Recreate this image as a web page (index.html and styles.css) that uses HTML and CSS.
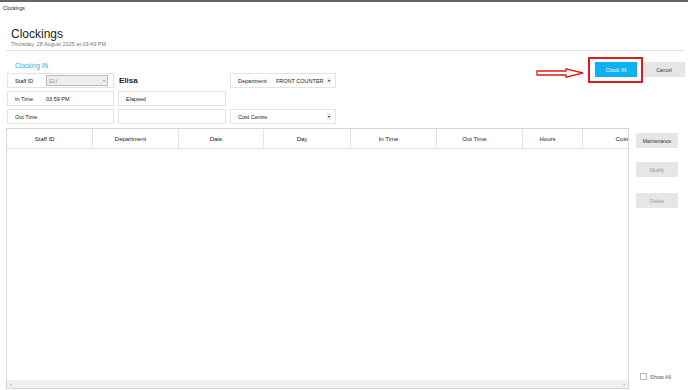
FILE: index.html
```html
<!DOCTYPE html>
<html lang="en">
<head>
    <meta charset="UTF-8">
    <title>Clockings</title>
    <link rel="stylesheet" href="styles.css">
</head>
<body>

    <div class="window-title">Clockings</div>

    <div class="page-header">
        <h1>Clockings</h1>
        <div class="subtitle">Thursday, 28 August 2025 at 03:49 PM</div>
    </div>

    <div class="top-area">
        <div class="clock-form">
            <div class="section-title">Clocking IN</div>
            <div class="form-grid">
                <div class="field">
                    <span class="label">Staff ID</span>
                    <span class="select grey">ELI<span class="caret">&#9662;</span></span>
                </div>
                <div class="staff-name">Elisa</div>
                <div class="field">
                    <span class="label wide">Department</span>
                    <span class="value">FRONT COUNTER</span>
                    <span class="drop">&#9662;</span>
                </div>

                <div class="field">
                    <span class="label">In Time</span>
                    <span class="value">03:59 PM</span>
                </div>
                <div class="field">
                    <span class="label">Elapsed</span>
                </div>
                <div></div>

                <div class="field">
                    <span class="label">Out Time</span>
                </div>
                <div class="field"></div>
                <div class="field">
                    <span class="label">Cost Centre</span>
                    <span class="drop">&#9662;</span>
                </div>
            </div>
        </div>

        <div class="actions">
            <svg class="arrow" width="48" height="10" viewBox="0 0 48 10">
                <path d="M1 3 H30 V0.8 L47 5 L30 9.2 V7 H1 Z" fill="none" stroke="#e01b1b" stroke-width="1.3"/>
            </svg>
            <div class="highlight">
                <button class="btn-primary">Clock IN</button>
            </div>
            <button class="btn">Cancel</button>
        </div>
    </div>

    <div class="main-area">
        <div class="table-box">
            <div class="table-scroll">
                <table id="clockTable">
                    <colgroup>
                        <col style="width: 85px">
                        <col style="width: 86px">
                        <col style="width: 85px">
                        <col style="width: 87px">
                        <col style="width: 86px">
                        <col style="width: 86px">
                        <col style="width: 60px">
                        <col style="width: 108px">
                    </colgroup>
                    <thead>
                        <tr>
                            <th>Staff ID</th>
                            <th>Department</th>
                            <th>Date</th>
                            <th>Day</th>
                            <th>In Time</th>
                            <th>Out Time</th>
                            <th>Hours</th>
                            <th>Cost Centre</th>
                        </tr>
                    </thead>
                    <tbody></tbody>
                </table>
            </div>
            <div class="hscroll">
                <span>&#8249;</span>
                <span>&#8250;</span>
            </div>
        </div>

        <div class="side">
            <button class="btn">Maintenance</button>
            <button class="btn disabled">Modify</button>
            <button class="btn disabled">Delete</button>
            <label class="show-all"><span class="box"></span>Show All</label>
        </div>
    </div>

</body>
</html>
```

FILE: styles.css
```css
body {
    margin: 0;
    font-family: "Liberation Sans", Arial, sans-serif;
    color: #222;
    background: #fff;
    width: 688px;
    height: 390px;
    overflow: hidden;
}
.window-title {
    border-top: 2px solid #666;
    font-size: 5px;
    padding: 3px 0 0 3px;
    height: 9px;
}
.page-header {
    margin: 14px 4px 0 6px;
    padding: 0 0 2px 5px;
    border-bottom: 1px solid #e2e2e2;
}
h1 {
    margin: 0;
    font-size: 12px;
    font-weight: normal;
    line-height: 12px;
}
.subtitle {
    font-size: 5.5px;
    line-height: 7px;
    color: #777;
    margin-top: 1px;
}
.top-area {
    display: flex;
    justify-content: space-between;
    padding: 6px 3px 0 7px;
}
.section-title {
    color: #29aae2;
    font-size: 6.5px;
    line-height: 8px;
    margin: 5px 0 3px 8px;
}
.form-grid {
    display: grid;
    grid-template-columns: 107px 108px 106px;
    grid-auto-rows: 15px;
    column-gap: 4px;
    row-gap: 3px;
}
.field {
    border: 1px solid #e4e4e4;
    display: flex;
    align-items: center;
    font-size: 5.5px;
    padding: 0 4px 0 7px;
}
.label {
    width: 31px;
}
.label.wide {
    width: 38px;
}
.value {
    flex: 1;
}
.select {
    flex: 1;
    display: flex;
    justify-content: space-between;
    align-items: center;
    height: 9px;
    padding: 0 2px;
    border: 1px solid #bbb;
    background: #eee;
    color: #999;
    margin-right: 1px;
}
.caret {
    font-size: 4px;
    color: #999;
}
.drop {
    font-size: 4px;
    background: #eee;
    padding: 1px 1px;
    margin-left: auto;
}
.staff-name {
    font-weight: bold;
    font-size: 8px;
    display: flex;
    align-items: center;
    padding-left: 1px;
}
.actions {
    display: flex;
    align-items: flex-start;
}
.arrow {
    margin-top: 11px;
    margin-right: 4px;
}
.highlight {
    display: flex;
    border: 2px solid #e01b1b;
    padding: 3px 4px 4px 5px;
}
button {
    font-family: "Liberation Sans", Arial, sans-serif;
    border: none;
    cursor: pointer;
}
.btn-primary {
    width: 42px;
    height: 15px;
    font-size: 5.5px;
    background: #0bb1f2;
    color: #fff;
    padding: 0;
}
.btn {
    width: 42px;
    height: 15px;
    font-size: 5px;
    background: #e6e6e6;
    color: #333;
    padding: 0;
}
.actions .btn {
    margin-top: 5px;
}
.main-area {
    display: flex;
    padding: 4px 0 0 6px;
}
.table-box {
    width: 621px;
    height: 259px;
    border: 1px solid #d6d6d6;
    display: flex;
    flex-direction: column;
}
.table-scroll {
    flex: 1;
    overflow: hidden;
}
table {
    border-collapse: collapse;
    table-layout: fixed;
    width: 683px;
}
th {
    height: 19px;
    font-size: 6px;
    font-weight: normal;
    text-align: center;
    border-right: 1px solid #e4e4e4;
    border-bottom: 1px solid #e4e4e4;
    padding: 0 9px 0 0;
    white-space: nowrap;
    overflow: hidden;
}
.hscroll {
    height: 8px;
    background: #f0f0f0;
    display: flex;
    justify-content: space-between;
    align-items: center;
    padding: 0 3px;
    font-size: 6px;
    line-height: 8px;
    color: #aaa;
}
.side {
    flex: 1;
    display: flex;
    flex-direction: column;
    align-items: flex-start;
    padding: 5px 0 0 7px;
    gap: 14px;
}
.side .btn:nth-child(3) {
    margin-top: 2px;
}
.btn.disabled {
    color: #999;
}
.show-all {
    margin-top: auto;
    margin-bottom: 9px;
    margin-left: 4px;
    font-size: 5.5px;
    color: #555;
    display: flex;
    align-items: center;
    gap: 3px;
}
.box {
    width: 5px;
    height: 5px;
    border: 1px solid #bbb;
    background: #fff;
}
```
